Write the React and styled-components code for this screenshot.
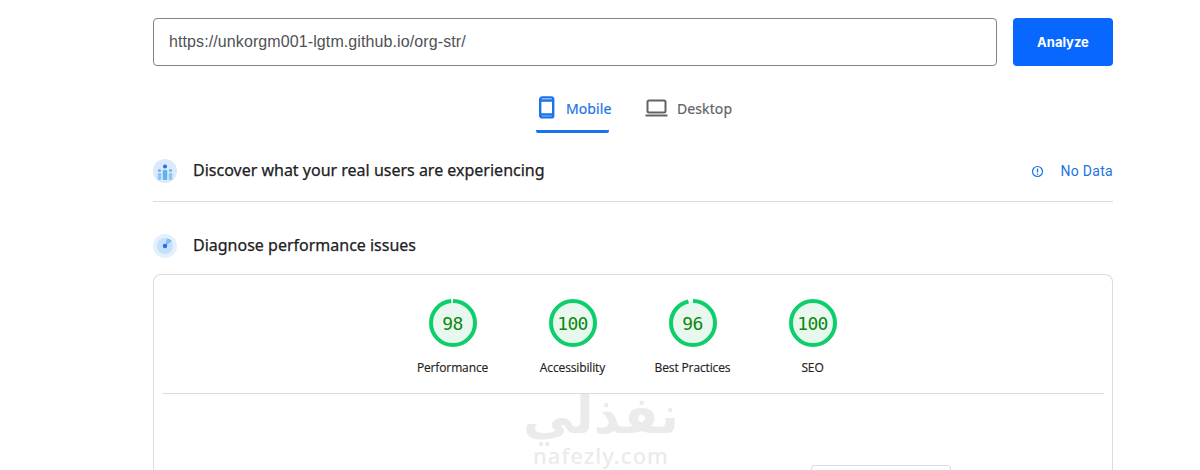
import React from "react";
import styled, { createGlobalStyle } from "styled-components";

const Global = createGlobalStyle`
  html, body { margin: 0; padding: 0; background: #fff; height: 470px; overflow: hidden; }
  body { font-family: Roboto, "Liberation Sans", sans-serif; }
`;

const Page = styled.main`
  position: relative;
  display: flow-root;
  width: 960px;
  height: 470px;
  margin: 0 0 0 153px;
`;

const CutLabel = styled.div`
  height: 18px;
  margin-top: -17px;
  font: 14px/17px Roboto, sans-serif;
  color: #202124;
`;

const UrlRow = styled.div`
  display: flex;
  gap: 16px;
  margin-top: 17px;
`;

const UrlField = styled.div`
  flex: 1;
  box-sizing: border-box;
  height: 48px;
  border: 1px solid #80868b;
  border-radius: 4px;
  padding: 0 15px;
  display: flex;
  align-items: center;
  font: 16px "Liberation Sans", Arial, sans-serif;
  letter-spacing: 0.1px;
  color: #4f5255;
`;

const AnalyzeButton = styled.button`
  width: 100px;
  height: 48px;
  border: 0;
  border-radius: 4px;
  background: #0767fe;
  color: #fff;
  font: 700 13px Inter, "Liberation Sans", sans-serif;
  padding: 0;
`;

const Tabs = styled.div`
  display: flex;
  justify-content: center;
  gap: 24px;
  margin-top: 20px;
`;

const Tab = styled.div`
  box-sizing: border-box;
  width: ${(p) => p.$w}px;
  height: 47px;
  display: flex;
  align-items: center;
  gap: ${(p) => p.$gap}px;
  padding-left: ${(p) => p.$pad}px;
  white-space: nowrap;
  font: 400 14px "Noto Sans", sans-serif;
  letter-spacing: 0.1px;
  -webkit-text-stroke: 0.2px currentColor;
  color: ${(p) => (p.$active ? "#1a73e8" : "#5f6368")};
  border-bottom: 3px solid ${(p) => (p.$active ? "#1a73e8" : "transparent")};
  border-radius: 0 0 2px 2px;

  & > svg {
    flex: none;
  }
`;

const Section = styled.div`
  display: flex;
  align-items: flex-start;
  gap: 16px;
  padding: ${(p) => p.$top}px 0 ${(p) => p.$bottom}px;
  border-bottom: ${(p) => (p.$line ? "1px solid #dadce0" : "0")};
`;

const Heading = styled.h2`
  flex: 1;
  margin: -1px 0 1px;
  font: 400 16px/24px "Noto Sans", sans-serif;
  -webkit-text-stroke: 0.25px currentColor;
  color: #202124;
`;

const NoData = styled.div`
  display: flex;
  align-items: center;
  gap: 16px;
  height: 24px;
  font: 14px Roboto, sans-serif;
  letter-spacing: 0.3px;
  color: #1a73e8;
`;

const Card = styled.section`
  box-sizing: border-box;
  height: 230px;
  border: 1px solid #dadce0;
  border-bottom: 0;
  border-radius: 8px 8px 0 0;
  padding: 0 8px;
`;

const Scores = styled.div`
  display: flex;
  justify-content: center;
  height: 119px;
  padding-top: 24px;
  padding-right: 1px;
  box-sizing: border-box;
  border-bottom: 1px solid #dadce0;
`;

const Score = styled.div`
  width: 120px;
  display: flex;
  flex-direction: column;
  align-items: center;
`;

const Gauge = styled.div`
  position: relative;
  width: 48px;
  height: 48px;
  display: flex;
  align-items: center;
  justify-content: center;
`;

const GaugeSvg = styled.svg`
  position: absolute;
  inset: 0;
  transform: rotate(-90deg);
`;

const ScoreNumber = styled.span`
  position: relative;
  font: 18px "DejaVu Sans Mono", "Liberation Mono", monospace;
  letter-spacing: -0.7px;
  color: #0a880f;
`;

const ScoreLabel = styled.div`
  margin-top: 13px;
  font: 400 12px/16px "Open Sans", sans-serif;
  letter-spacing: -0.13px;
  -webkit-text-stroke: 0.15px currentColor;
  color: #212121;
  white-space: nowrap;
`;

const SmallBox = styled.div`
  position: absolute;
  left: 658px;
  top: 465px;
  width: 140px;
  height: 20px;
  box-sizing: border-box;
  border: 1px solid #dadce0;
  border-radius: 3px;
`;

const Watermark = styled.div`
  position: absolute;
  left: 368px;
  top: 390px;
  width: 160px;
  text-align: center;
  pointer-events: none;
  color: #ebebeb;
`;

const WatermarkArabic = styled.div`
  font: 700 51px/52px "DejaVu Sans", "Noto Sans", sans-serif;
  direction: rtl;
  white-space: nowrap;
`;

const WatermarkLatin = styled.div`
  font: 500 22px/26px "Noto Sans", sans-serif;
  letter-spacing: 1px;
`;

function Ring({ value }) {
  const r = 22;
  const c = 2 * Math.PI * r;
  const arc = (value / 100) * c;
  return (
    <GaugeSvg viewBox="0 0 48 48" width="48" height="48">
      <circle cx="24" cy="24" r={r} fill="#e9f8ef" />
      <circle
        cx="24"
        cy="24"
        r={r}
        fill="none"
        stroke="#0cce6b"
        strokeWidth="4"
        strokeDasharray={`${arc} ${c}`}
      />
    </GaugeSvg>
  );
}

const ScoreItem = ({ value, label }) => (
  <Score>
    <Gauge>
      <Ring value={value} />
      <ScoreNumber>{value}</ScoreNumber>
    </Gauge>
    <ScoreLabel>{label}</ScoreLabel>
  </Score>
);

const MobileIcon = () => (
  <svg width="18" height="24" viewBox="0 0 18 24" fill="none" stroke="#1a73e8" strokeWidth="2.4">
    <rect x="2.2" y="1.4" width="13" height="20" rx="2" />
    <path d="M2.2 4.5h13M2.2 18.5h13" />
  </svg>
);

const LaptopIcon = () => (
  <svg width="24" height="20" viewBox="0 0 24 20" fill="none" stroke="#5f6368" strokeWidth="2">
    <rect x="2.5" y="2.5" width="18" height="12" rx="1.5" />
    <path d="M0.5 17.5h22" />
  </svg>
);

const UsersIcon = () => (
  <svg width="24" height="24" viewBox="0 0 24 24">
    <circle cx="12" cy="12" r="12" fill="#dbe9fb" />
    <circle cx="12" cy="7.5" r="2" fill="#1a73e8" />
    <circle cx="6.5" cy="11.5" r="1.6" fill="#6bb5ee" />
    <circle cx="17.5" cy="11.5" r="1.6" fill="#6bb5ee" />
    <rect x="9.8" y="11" width="4.4" height="10" rx="1" fill="#62b0ee" />
    <rect x="4.8" y="14" width="3.4" height="7" rx="1" fill="#8cc6f3" />
    <rect x="15.8" y="14" width="3.4" height="7" rx="1" fill="#8cc6f3" />
  </svg>
);

const DiagnoseIcon = () => (
  <svg width="24" height="24" viewBox="0 0 24 24">
    <circle cx="12" cy="12" r="12" fill="#e3f0fd" />
    <circle cx="12" cy="12" r="8" fill="#c6e0fb" />
    <path d="M12 12 L14 4.5 A8 8 0 0 1 19 7 Z" fill="#7fbaf3" />
    <circle cx="12" cy="12" r="2.2" fill="#1a73e8" />
  </svg>
);

const InfoIcon = () => (
  <svg width="13" height="13" viewBox="0 0 13 13" fill="none" stroke="#1a73e8">
    <circle cx="6.5" cy="6.5" r="5" strokeWidth="1.2" />
    <path d="M6.5 3.5v4M6.5 8.6v1.1" strokeWidth="1.3" />
  </svg>
);

export default function App() {
  return (
    <Page>
      <Global />
      <CutLabel>Enter a web page URL</CutLabel>
      <UrlRow>
        <UrlField>https://unkorgm001-lgtm.github.io/org-str/</UrlField>
        <AnalyzeButton>Analyze</AnalyzeButton>
      </UrlRow>
      <Tabs>
        <Tab $active $w={73} $gap={10} $pad={2}>
          <MobileIcon />
          Mobile
        </Tab>
        <Tab $w={97} $gap={8} $pad={12}>
          <LaptopIcon />
          Desktop
        </Tab>
      </Tabs>
      <Section $top={26} $bottom={18} $line>
        <UsersIcon />
        <Heading>Discover what your real users are experiencing</Heading>
        <NoData>
          <InfoIcon />
          No Data
        </NoData>
      </Section>
      <Section $top={32} $bottom={16}>
        <DiagnoseIcon />
        <Heading>Diagnose performance issues</Heading>
      </Section>
      <Card>
        <Scores>
          <ScoreItem value={98} label="Performance" />
          <ScoreItem value={100} label="Accessibility" />
          <ScoreItem value={96} label="Best Practices" />
          <ScoreItem value={100} label="SEO" />
        </Scores>
      </Card>
      <SmallBox />
      <Watermark>
        <WatermarkArabic>نفذلي</WatermarkArabic>
        <WatermarkLatin>nafezly.com</WatermarkLatin>
      </Watermark>
    </Page>
  );
}
